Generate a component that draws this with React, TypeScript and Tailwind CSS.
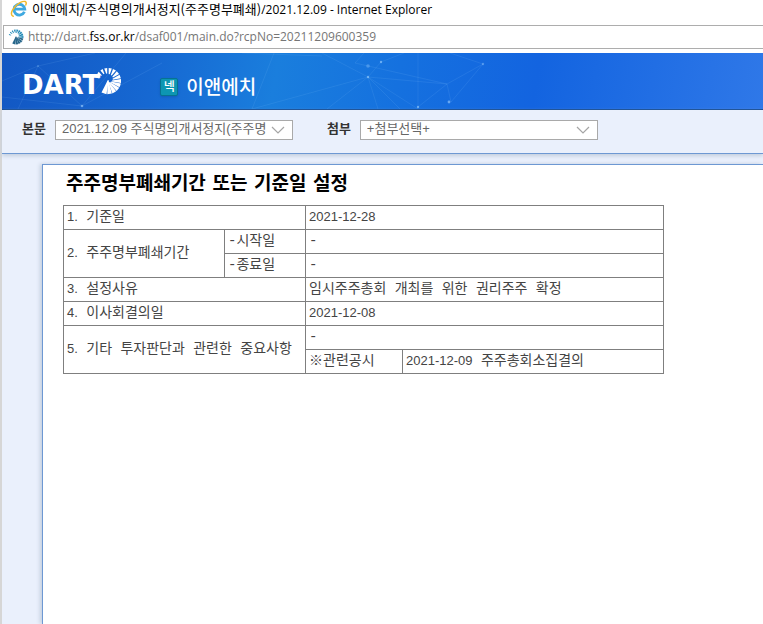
import type { ReactNode } from 'react';

const sparks = [
  { angle: -160, inner: 9, half: 0.9 },
  { angle: -140, inner: 8.5, half: 1.1 },
  { angle: -120, inner: 8, half: 1.3 },
  { angle: -100, inner: 7.5, half: 1.5 },
  { angle: -80, inner: 7, half: 1.6 },
  { angle: -60, inner: 6.5, half: 1.7 },
  { angle: -40, inner: 6, half: 1.8 },
  { angle: -20, inner: 5, half: 1.9 },
  { angle: 0, inner: 4, half: 1.9 },
  { angle: 20, inner: 3, half: 2 },
  { angle: 40, inner: 2, half: 2 },
  { angle: 61, inner: 1, half: 2.1 },
  { angle: 83, inner: 0, half: 2.3 },
  { angle: 108, inner: -1, half: 2.6 },
];

function Burst({ className, tail }: { className: string; tail: string }) {
  return (
    <svg viewBox="-14 -14 28 28" className={className} aria-hidden="true">
      {sparks.map(({ angle, inner, half }, i) => (
        <path
          key={angle}
          d={`M${inner} -0.5L13 ${-half}V${half}L${inner} 0.5Z`}
          fill={i > 8 ? tail : 'currentColor'}
          transform={`rotate(${angle})`}
        />
      ))}
    </svg>
  );
}

function ExplorerIcon() {
  return (
    <svg viewBox="0 0 18 18" className="size-[18px]" fill="none" aria-hidden="true">
      <path d="M14.4 11.8A5.4 5.4 0 1 1 14.8 9.2H5.5" stroke="#3fa9e0" strokeWidth="2.8" />
      <path
        d="M3.2 16.2C-1.4 14.8 3.6 6 10 2.6C14.4 0.4 17.4 1.2 15.8 5"
        stroke="#f0b92c"
        strokeWidth="1.5"
        strokeLinecap="round"
      />
    </svg>
  );
}

function HeaderPattern() {
  return (
    <svg
      viewBox="0 0 761 56"
      preserveAspectRatio="xMinYMin slice"
      className="absolute inset-0 h-full w-full"
      fill="none"
      aria-hidden="true"
    >
      <g stroke="#9fd0ff" strokeOpacity="0.14" strokeWidth="0.8">
        <path d="M0 28L36 13L93 0M36 13L80 53L124 0M36 13L16 56M80 53L160 10M0 44L80 53" />
        <path d="M366 24L320 0M366 24L325 56M366 24L379 9L402 0M366 24L398 56M366 24L376 56M366 24L416 56" />
        <path d="M366 24L445 31L481 11L448 0M445 31L416 54M445 31L449 49L481 11M416 0V54M250 56L366 24M353 10L362 0M353 10L445 31" />
        <path d="M272 0L250 56M240 0L320 3" />
      </g>
      <g fill="#9fd0ff" fillOpacity="0.6">
        <circle cx="36" cy="13" r="1" fillOpacity="0.3" />
        <circle cx="80" cy="53" r="1.3" />
        <circle cx="366" cy="13" r="1.8" fillOpacity="0.35" />
        <circle cx="366" cy="24" r="1.2" />
        <circle cx="379" cy="9" r="1.2" />
        <circle cx="416" cy="54" r="1.2" />
        <circle cx="447" cy="49" r="1.4" />
        <circle cx="481" cy="11" r="1.2" fillOpacity="0.4" />
      </g>
    </svg>
  );
}

function Digits({ children }: { children: ReactNode }) {
  return (
    <span className="font-['Liberation_Sans','Noto_Sans_CJK_KR',sans-serif] text-[13px]">
      {children}
    </span>
  );
}

interface PickerProps {
  id: string;
  label: string;
  value: string;
}

function Picker({ id, label, value }: PickerProps) {
  return (
    <div className="flex items-start gap-[9px]">
      <label htmlFor={id} className="text-[13px] leading-4 font-bold text-[#333]">
        {label}
      </label>
      <div className="relative">
        <select
          id={id}
          className="block h-5 w-[238px] appearance-none overflow-hidden border border-[#a9a9a9] bg-white pr-6 pb-0.5 pl-1.5 font-['Liberation_Sans','Noto_Sans_CJK_KR',sans-serif] text-[13px] leading-4 text-[#666]"
        >
          <option>{value}</option>
        </select>
        <svg
          viewBox="0 0 14 8"
          className="pointer-events-none absolute top-1.5 right-2 h-2 w-3.5"
          fill="none"
          aria-hidden="true"
        >
          <path d="M1 1L7 7L13 1" stroke="#a5a5a5" strokeWidth="1.2" />
        </svg>
      </div>
    </div>
  );
}

const cell = 'h-6 border border-[#7f7f7f] px-[3px] pb-0.5 text-left font-normal';

function Report() {
  return (
    <table className="w-[601px] max-w-full table-fixed border-collapse font-['Liberation_Mono','Noto_Sans_CJK_KR',monospace] text-sm leading-5 text-[#444]">
      <colgroup>
        <col className="w-[161px]" />
        <col className="w-[81px]" />
        <col className="w-[97px]" />
        <col />
      </colgroup>
      <tbody>
        <tr>
          <th scope="row" colSpan={2} className={cell}><Digits>1.</Digits> 기준일</th>
          <td colSpan={2} className={cell}><Digits>2021-12-28</Digits></td>
        </tr>
        <tr>
          <th scope="rowgroup" rowSpan={2} className={cell}><Digits>2.</Digits> 주주명부폐쇄기간</th>
          <th scope="row" className={cell}>-시작일</th>
          <td colSpan={2} className={cell}>-</td>
        </tr>
        <tr>
          <th scope="row" className={cell}>-종료일</th>
          <td colSpan={2} className={cell}>-</td>
        </tr>
        <tr>
          <th scope="row" colSpan={2} className={cell}><Digits>3.</Digits> 설정사유</th>
          <td colSpan={2} className={cell}>임시주주총회 개최를 위한 권리주주 확정</td>
        </tr>
        <tr>
          <th scope="row" colSpan={2} className={cell}><Digits>4.</Digits> 이사회결의일</th>
          <td colSpan={2} className={cell}><Digits>2021-12-08</Digits></td>
        </tr>
        <tr>
          <th scope="rowgroup" rowSpan={2} colSpan={2} className={cell}>
            <Digits>5.</Digits> 기타 투자판단과 관련한 중요사항
          </th>
          <td colSpan={2} className={cell}>-</td>
        </tr>
        <tr>
          <th scope="row" className={cell}>※관련공시</th>
          <td className={cell}><Digits>2021-12-09</Digits> 주주총회소집결의</td>
        </tr>
      </tbody>
    </table>
  );
}

export default function App() {
  return (
    <div className="flex min-h-screen flex-col border-l-2 border-[#d6d6d6] bg-white font-['Open_Sans','Noto_Sans_CJK_KR',sans-serif]">
      <div className="flex h-[25px] items-start gap-1 pl-2 text-black">
        <ExplorerIcon />
        <h1 className="font-['Noto_Sans_CJK_KR',sans-serif] text-[13px] leading-[18px] whitespace-nowrap">
          이앤에치/주식명의개서정지(주주명부폐쇄)
          <span className="font-['Open_Sans',sans-serif] text-xs">/2021.12.09 - Internet Explorer</span>
        </h1>
      </div>

      <div className="mb-1 ml-px flex h-6 items-center gap-1 border border-r-0 border-[#adadad] pl-1">
        <Burst className="size-4 text-[#1c87b5]" tail="#27668a" />
        <p className="text-xs whitespace-nowrap text-[#767676]">
          http://dart.<span className="text-black">fss.or.kr</span>/dsaf001/main.do?rcpNo=20211209600359
        </p>
      </div>

      <header className="relative flex h-[57px] items-center border-b border-[#0d458f] bg-[linear-gradient(100deg,#1257c3_0%,#1668d2_20%,#1a7edd_36%,#1571df_52%,#1364e0_70%,#2f78e8_100%)] pl-5 text-white">
        <HeaderPattern />
        <a href="#" className="relative flex items-center" aria-label="DART">
          <span className="pt-2 font-['DejaVu_Sans',sans-serif] text-[26px] leading-7 font-bold">DART</span>
          <Burst className="-ml-1.5 size-7" tail="#ffffff" />
        </a>
        <div className="relative ml-[38px] flex items-center gap-2 pt-3">
          <span className="flex size-[18px] items-center justify-center rounded-xs border border-[#067391] bg-[#0d96b2] text-xs font-medium shadow-sm">
            넥
          </span>
          <h2 className="text-[19px] leading-6 font-medium">이앤에치</h2>
        </div>
      </header>

      <div className="relative flex h-11 gap-[34px] border-b border-[#6d98d3] bg-[#eaf0fc] pt-2.5 pl-5 shadow-[0_2px_4px_#c3cede]">
        <Picker id="body-doc" label="본문" value="2021.12.09 주식명의개서정지(주주명" />
        <Picker id="attachment" label="첨부" value="+첨부선택+" />
      </div>

      <main className="flex grow flex-col bg-[#eaf0fc] pt-2.5 pl-10">
        <section className="grow border-t border-l border-[#6d98d3] bg-white pt-1.5 pl-5 shadow-[-2px_0_4px_#c3cede]">
          <h3 className="mb-2.5 pl-[3px] font-['DejaVu_Sans','Noto_Sans_CJK_KR',sans-serif] text-[19px] leading-6 font-bold text-black">
            주주명부폐쇄기간 또는 기준일 설정
          </h3>
          <Report />
        </section>
      </main>
    </div>
  );
}
